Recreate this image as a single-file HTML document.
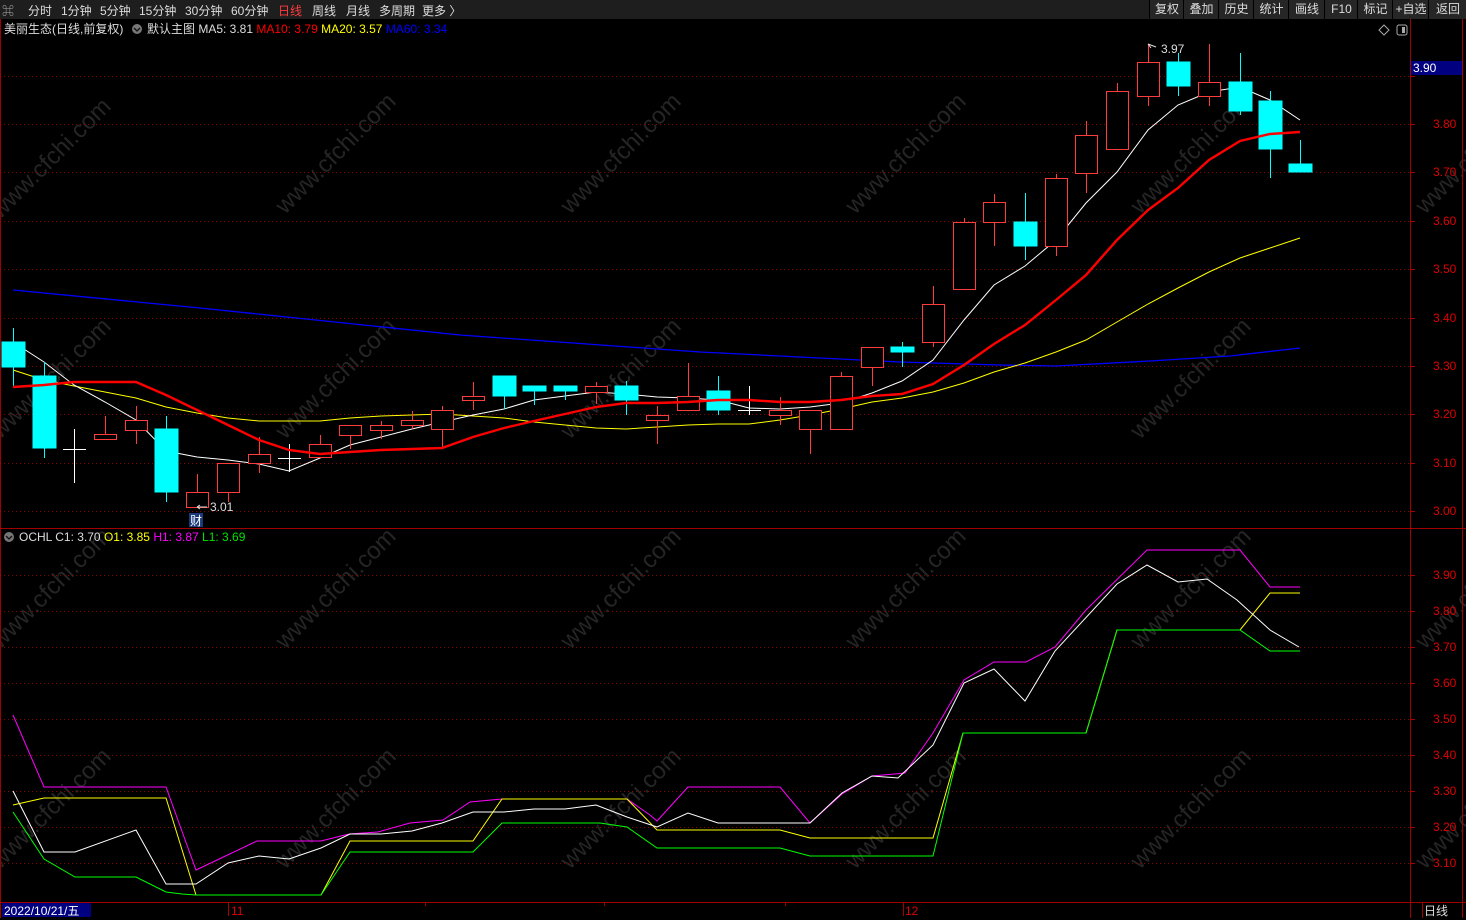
<!DOCTYPE html>
<html><head><meta charset="utf-8"><style>
html,body{margin:0;padding:0;background:#000;width:1466px;height:920px;overflow:hidden;font-family:"Liberation Sans","Noto Sans CJK SC",sans-serif;}
#top{position:absolute;left:0;top:0;width:1466px;height:19px;background:#1e1e1e;color:#ddd;font-size:12px;}
#top span{position:absolute;top:2px;}
.rb{position:absolute;top:0;height:19px;line-height:19px;border-left:1px solid #000;color:#ddd;font-size:12px;text-align:center;background:#262626}
svg{position:absolute;left:0;top:0}
</style></head><body>
<div id="top">
<span style="left:2px;color:#aaa">⌘</span>
<span style="left:28px">分时</span><span style="left:61px">1分钟</span><span style="left:100px">5分钟</span><span style="left:139px">15分钟</span><span style="left:185px">30分钟</span><span style="left:231px">60分钟</span><span style="left:278px;color:#ff3c3c">日线</span><span style="left:312px">周线</span><span style="left:346px">月线</span><span style="left:379px">多周期</span><span style="left:422px">更多 〉</span>
<div class="rb" style="left:1149px;width:34px">复权</div><div class="rb" style="left:1183px;width:35px">叠加</div><div class="rb" style="left:1218px;width:35px">历史</div><div class="rb" style="left:1253px;width:35px">统计</div><div class="rb" style="left:1288px;width:36px">画线</div><div class="rb" style="left:1324px;width:33px">F10</div><div class="rb" style="left:1357px;width:35px">标记</div><div class="rb" style="left:1392px;width:36px">+自选</div><div class="rb" style="left:1428px;width:38px">返回</div>
</div>
<svg width="1466" height="920" style="top:0" font-family="Liberation Sans, Noto Sans CJK SC, sans-serif">
<rect x="0" y="19" width="1466" height="901" fill="#000"/>
<g fill="#2a2a2a" font-size="24" opacity="0.9">
<text transform="translate(0,220) rotate(-45)">www.cfchi.com</text>
<text transform="translate(285,215) rotate(-45)">www.cfchi.com</text>
<text transform="translate(570,215) rotate(-45)">www.cfchi.com</text>
<text transform="translate(855,215) rotate(-45)">www.cfchi.com</text>
<text transform="translate(1140,215) rotate(-45)">www.cfchi.com</text>
<text transform="translate(1425,215) rotate(-45)">www.cfchi.com</text>
<text transform="translate(0,440) rotate(-45)">www.cfchi.com</text>
<text transform="translate(285,440) rotate(-45)">www.cfchi.com</text>
<text transform="translate(570,440) rotate(-45)">www.cfchi.com</text>
<text transform="translate(1140,440) rotate(-45)">www.cfchi.com</text>
<text transform="translate(0,650) rotate(-45)">www.cfchi.com</text>
<text transform="translate(285,650) rotate(-45)">www.cfchi.com</text>
<text transform="translate(570,650) rotate(-45)">www.cfchi.com</text>
<text transform="translate(855,650) rotate(-45)">www.cfchi.com</text>
<text transform="translate(1140,650) rotate(-45)">www.cfchi.com</text>
<text transform="translate(1425,650) rotate(-45)">www.cfchi.com</text>
<text transform="translate(0,870) rotate(-45)">www.cfchi.com</text>
<text transform="translate(285,870) rotate(-45)">www.cfchi.com</text>
<text transform="translate(570,870) rotate(-45)">www.cfchi.com</text>
<text transform="translate(855,870) rotate(-45)">www.cfchi.com</text>
<text transform="translate(1140,870) rotate(-45)">www.cfchi.com</text>
<text transform="translate(1425,870) rotate(-45)">www.cfchi.com</text>
</g>
<!-- grids -->
<g stroke="#8a0000" stroke-dasharray="1,3" stroke-width="1">
<path d="M0 76.5H1410M0 124.5H1410M0 172.5H1410M0 221.5H1410M0 269.5H1410M0 318.5H1410M0 366.5H1410M0 414.5H1410M0 463.5H1410M0 511.5H1410"/>
<path d="M0 575.5H1410M0 611.5H1410M0 647.5H1410M0 683.5H1410M0 719.5H1410M0 755.5H1410M0 791.5H1410M0 827.5H1410M0 863.5H1410"/>
</g>
<g stroke="#a00000" stroke-width="1">
<path d="M0 528.5H1466M1410.5 19V918M1462.5 19V918M0 902.5H1466M0.5 19V918"/>
<path d="M1410 76.5h5M1410 124.5h5M1410 172.5h5M1410 221.5h5M1410 269.5h5M1410 318.5h5M1410 366.5h5M1410 414.5h5M1410 463.5h5M1410 511.5h5M1410 575.5h5M1410 611.5h5M1410 647.5h5M1410 683.5h5M1410 719.5h5M1410 755.5h5M1410 791.5h5M1410 827.5h5M1410 863.5h5"/>
<path d="M228.5 902v14M903.5 902v14M425.5 902v4M604.5 902v4M785.5 902v4M1422.5 902v16"/>
</g>
<g fill="#e00000" font-size="12">
<text x="1433" y="128">3.80</text><text x="1433" y="176">3.70</text><text x="1433" y="225">3.60</text><text x="1433" y="273">3.50</text><text x="1433" y="322">3.40</text><text x="1433" y="370">3.30</text><text x="1433" y="418">3.20</text><text x="1433" y="467">3.10</text><text x="1433" y="515">3.00</text>
<text x="1433" y="579">3.90</text><text x="1433" y="615">3.80</text><text x="1433" y="651">3.70</text><text x="1433" y="687">3.60</text><text x="1433" y="723">3.50</text><text x="1433" y="759">3.40</text><text x="1433" y="795">3.30</text><text x="1433" y="831">3.20</text><text x="1433" y="867">3.10</text>
<text x="231" y="915">11</text><text x="905" y="915">12</text>
</g>
<rect x="1411" y="61" width="51" height="14" fill="#000080"/>
<text x="1413" y="72" fill="#fff" font-size="12">3.90</text>
<rect x="2" y="903" width="89" height="14" fill="#000080"/>
<text x="4" y="915" fill="#fff" font-size="12">2022/10/21/五</text>
<text x="1424" y="915" fill="#ddd" font-size="12">日线</text>
<!-- header -->
<text x="4" y="33" font-size="12" fill="#ddd">美丽生态(日线,前复权)</text>
<circle cx="137" cy="29" r="5" fill="#777"/><path d="M134 28l3 3 3-3" stroke="#111" fill="none" stroke-width="1.3"/>
<text x="147" y="33" font-size="12"><tspan fill="#ddd">默认主图 MA5: 3.81 </tspan><tspan fill="#ff0000">MA10: 3.79 </tspan><tspan fill="#ffff00">MA20: 3.57 </tspan><tspan fill="#0000ff">MA60: 3.34</tspan></text>
<path d="M1384 25l5 5-5 5-5-5z" stroke="#aaa" fill="none"/>
<rect x="1397" y="25" width="10" height="10" rx="2" stroke="#aaa" fill="none"/><rect x="1402" y="27" width="3" height="6" fill="#aaa"/>
<circle cx="9" cy="537" r="5" fill="#777"/><path d="M6 536l3 3 3-3" stroke="#111" fill="none" stroke-width="1.3"/>
<text x="19" y="541" font-size="12"><tspan fill="#ddd">OCHL C1: 3.70 </tspan><tspan fill="#ffff00">O1: 3.85 </tspan><tspan fill="#ff00ff">H1: 3.87 </tspan><tspan fill="#00e000">L1: 3.69</tspan></text>
<!-- MA lines -->
<polyline fill="none" stroke="#0000ff" stroke-width="1.3" points="13,290 200,308 460,335 700,352 900,362 1000,365 1056,366 1150,361 1230,356 1300,348"/>
<polyline fill="none" stroke="#ffff00" stroke-width="1" points="13,370 44,380 74,386 105,392 136,398 166,407 197,413 228,418 259,421 289,421 320,421 350,418 381,416 412,415 442,414 473,416 504,418 534,422 565,425 596,428 626,429 657,427 688,425 718,424 749,424 780,420 810,415 841,409 872,402 902,398 933,392 964,383 994,372 1025,363 1056,352 1086,340 1117,322 1148,304 1178,288 1209,272 1240,258 1270,248 1300,238"/>
<polyline fill="none" stroke="#fff" stroke-width="1" points="13,342 44,362 74,385 105,402 136,420 166,451 197,457 228,460 259,464 289,471 320,458 350,445 381,437 412,429 442,422 473,415 504,409 534,400 565,396 596,392 626,394 657,397 688,398 718,400 749,408 780,409 810,407 841,403 872,393 902,381 933,360 964,320 994,285 1025,266 1056,240 1086,203 1117,172 1148,130 1178,105 1209,92 1240,87 1270,100 1300,120"/>
<!-- candles -->
<g stroke-width="1" shape-rendering="crispEdges">
<g stroke="#00ffff" fill="#00ffff">
<path d="M13.5 328V386M44.5 362V458M166.5 416V502M504.5 376V409M534.5 386V405M565.5 386V400M626.5 381V415M718.5 376V415M902.5 342V367M1025.5 193V260M1178.5 53V96M1240.5 53V115M1270.5 91V178M1300.5 140V172"/>
<rect x="2" y="342" width="23" height="25"/><rect x="33" y="376" width="23" height="72"/><rect x="155" y="429" width="23" height="63"/><rect x="493" y="376" width="23" height="20"/><rect x="523" y="386" width="23" height="5"/><rect x="554" y="386" width="23" height="5"/><rect x="615" y="386" width="23" height="14"/><rect x="707" y="391" width="23" height="19"/><rect x="891" y="347" width="23" height="5"/><rect x="1014" y="222" width="23" height="24"/><rect x="1167" y="62" width="23" height="24"/><rect x="1229" y="82" width="23" height="29"/><rect x="1259" y="101" width="23" height="48"/><rect x="1289" y="164" width="23" height="8"/>
</g>
<g stroke="#fff" fill="none">
<path d="M74.5 429V483M63 449.5H86M289.5 444V472M278 458.5H301M749.5 386V415M738 410.5H761"/>
</g>
<g stroke="#ff3c3c" fill="#000">
<path d="M105.5 416V439M136.5 406V444M197.5 474V507M228.5 463V502M259.5 437V473M320.5 435V457M350.5 425V449M381.5 421V439M412.5 411V429M442.5 406V449M473.5 382V410M596.5 382V404M657.5 406V444M688.5 363V410M780.5 397V425M810.5 410V454M841.5 372V429M872.5 347V386M933.5 286V347M964.5 218V289M994.5 194V246M1056.5 174V256M1086.5 121V193M1117.5 83V149M1148.5 44V106M1209.5 44V106"/>
<rect x="94.5" y="434.5" width="22" height="5"/><rect x="125.5" y="420.5" width="22" height="10"/><rect x="186.5" y="492.5" width="22" height="15"/><rect x="217.5" y="463.5" width="22" height="29"/><rect x="248.5" y="454.5" width="22" height="9"/><rect x="309.5" y="444.5" width="22" height="13"/><rect x="339.5" y="425.5" width="22" height="10"/><rect x="370.5" y="425.5" width="22" height="5"/><rect x="401.5" y="420.5" width="22" height="5"/><rect x="431.5" y="410.5" width="22" height="19"/><rect x="462.5" y="396.5" width="22" height="4"/><rect x="585.5" y="386.5" width="22" height="6"/><rect x="646.5" y="415.5" width="22" height="5"/><rect x="677.5" y="396.5" width="22" height="14"/><rect x="769.5" y="410.5" width="22" height="5"/><rect x="799.5" y="410.5" width="22" height="19"/><rect x="830.5" y="376.5" width="22" height="53"/><rect x="861.5" y="347.5" width="22" height="20"/><rect x="922.5" y="304.5" width="22" height="38"/><rect x="953.5" y="222.5" width="22" height="67"/><rect x="983.5" y="202.5" width="22" height="20"/><rect x="1045.5" y="178.5" width="22" height="68"/><rect x="1075.5" y="135.5" width="22" height="38"/><rect x="1106.5" y="91.5" width="22" height="58"/><rect x="1137.5" y="62.5" width="22" height="34"/><rect x="1198.5" y="82.5" width="22" height="14"/>
</g>
</g>
<polyline fill="none" stroke="#ff0000" stroke-width="2.4" points="13,387 44,385 74,382 105,382 136,382 166,395 197,410 228,425 259,440 289,450 320,454 350,452 381,450 412,449 442,448 473,437 504,428 534,421 565,414 596,407 626,403 657,403 688,402 718,400 749,400 780,402 810,402 841,400 872,396 902,394 933,384 964,365 994,344 1025,325 1056,300 1086,275 1117,240 1148,210 1178,188 1209,160 1240,141 1270,134 1300,132"/>
<text x="1161" y="53" font-size="12" fill="#ddd">3.97</text><path d="M1148 44l3 4M1148 44l8 3" stroke="#ddd" fill="none"/>
<text x="210" y="511" font-size="12" fill="#ddd">3.01</text><path d="M197 507h10M197 507l3-2M197 507l3 2" stroke="#ddd" fill="none"/>
<rect x="189" y="513" width="14" height="14" fill="#1a3a7a"/><text x="190" y="525" font-size="12" fill="#fff">财</text>
<!-- lower panel -->
<polyline fill="none" stroke="#ff00ff" stroke-width="1" points="13,715 44,787 166,787 196,870 257,841 321,841 349,834 378,832 410,823 443,820 470,802 502,799 627,799 650,815 657,821 688,787 780,787 810,823 842,794 872,776 905,773 933,733 964,680 994,662 1026,662 1055,647 1086,610 1147,550 1240,550 1270,587 1300,587"/>
<polyline fill="none" stroke="#ffff00" stroke-width="1" points="13,805 44,798 166,798 196,895 321,895 350,841 473,841 502,799 627,799 657,830 780,830 810,838 933,838 963,733 1086,733 1117,630 1240,630 1270,593 1300,593"/>
<polyline fill="none" stroke="#00ff00" stroke-width="1" points="13,812 44,859 75,877 136,877 166,892 182,894 196,895 321,895 350,852 473,852 502,823 600,823 627,827 657,848 780,848 810,856 933,856 963,733 1086,733 1117,630 1240,630 1270,651 1300,651"/>
<polyline fill="none" stroke="#fff" stroke-width="1" points="13,791 44,852 75,852 136,830 166,884 196,884 228,863 259,856 289,859 321,848 350,834 381,834 412,831 442,823 473,812 504,812 534,809 565,809 596,805 627,817 657,827 688,813 718,823 810,823 842,793 872,776 898,778 933,745 964,683 994,669 1025,701 1055,651 1117,584 1147,565 1178,582 1207,579 1237,600 1270,630 1299,647"/>
</svg>
</body></html>
